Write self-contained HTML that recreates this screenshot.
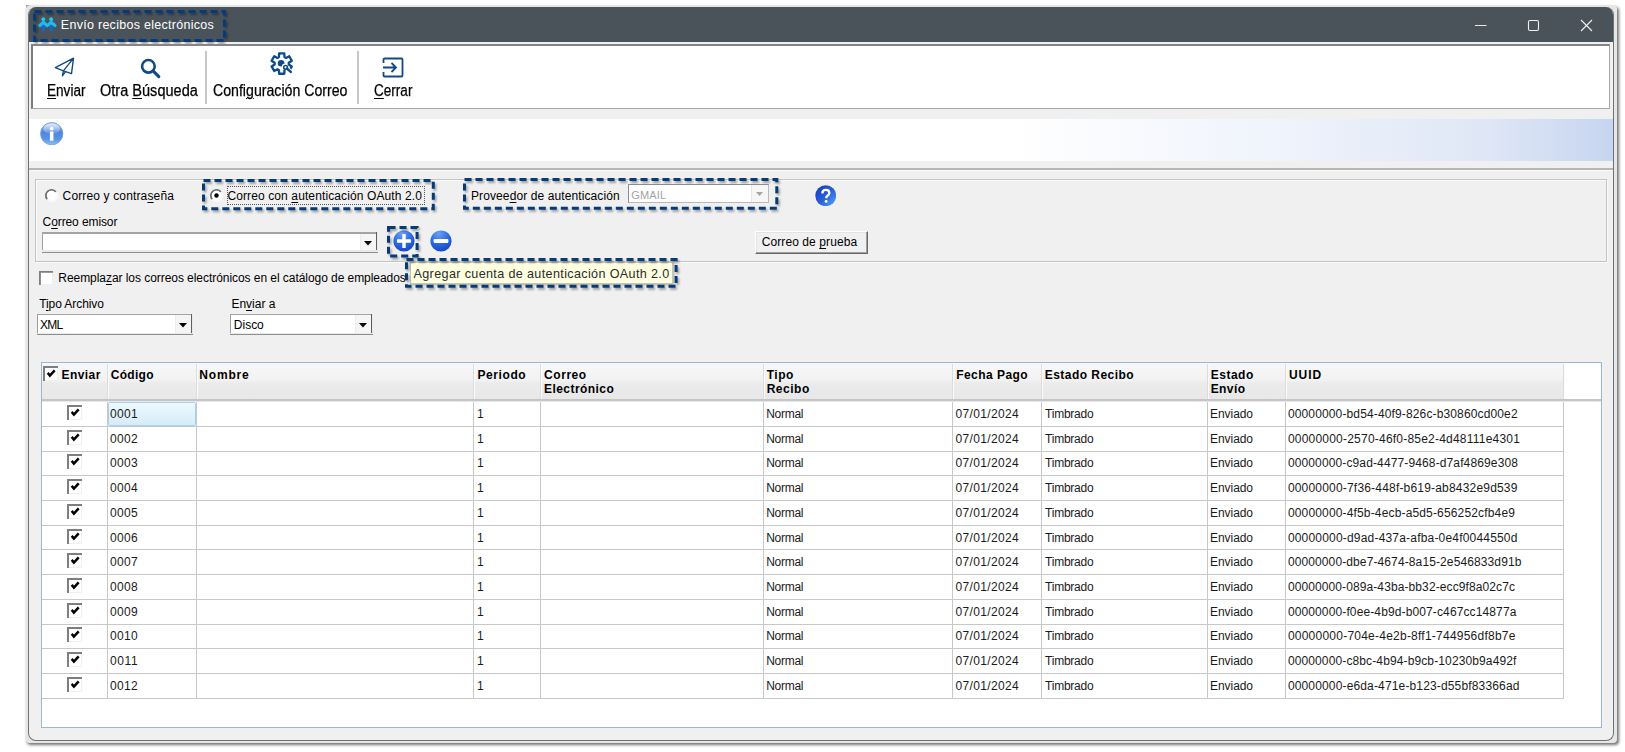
<!DOCTYPE html>
<html><head><meta charset="utf-8"><title>Envio recibos electronicos</title>
<style>
html,body{margin:0;padding:0;}
body{width:1625px;height:752px;position:relative;overflow:hidden;background:#fff;font-family:"Liberation Sans",sans-serif;}
.t{position:absolute;white-space:pre;}
.abs{position:absolute;}
u{text-decoration:underline;text-underline-offset:2px;text-decoration-thickness:1.4px;}
</style></head><body>
<svg width="0" height="0" style="position:absolute"><defs><filter id="bl" x="-20%" y="-50%" width="140%" height="200%"><feGaussianBlur stdDeviation="1.2"/></filter></defs></svg>
<div style="position:absolute;left:25.5px;top:5px;width:1591px;height:738px;background:#e6e6e6;border-radius:4px;box-shadow:1.5px 2px 3px rgba(0,0,0,.55);"></div>
<div style="position:absolute;left:28px;top:7px;width:1586px;height:734px;background:#f0f0f0;border-radius:8px;border:1px solid #6b7278;border-right-width:1.4px;border-bottom-width:1.5px;border-top:none;box-sizing:border-box;overflow:hidden;"><div style="position:absolute;left:-1px;top:0px;width:1586px;height:35px;background:#4b535a;"></div></div>
<svg class="abs" style="left:26px;top:5px" width="6" height="4"><path d="M0 0 H4.6 Q1.2 0.6 0 3.2 Z" fill="#a2a2a2"/></svg>
<svg class="abs" style="left:34px;top:12px;overflow:visible" width="30" height="26" viewBox="34 12 30 26"><rect x="41.8" y="24" width="3.1" height="7.5" rx="1.2" fill="#1f62c6"/><rect x="49.7" y="24" width="3.1" height="7.5" rx="1.2" fill="#1f62c6"/><path d="M39.8 25.5 L43.3 22.3 L47.3 25.7 L51.1 22.3 L55 25.5" fill="none" stroke="#1bbcf2" stroke-width="3.1" stroke-linecap="round" stroke-linejoin="round"/><circle cx="43.3" cy="19.3" r="1.95" fill="#1cc6f5"/><circle cx="51.1" cy="19.3" r="1.95" fill="#1cc6f5"/></svg>
<span class="t" style="left:60.80px;top:17.00px;font-size:12.5px;line-height:16px;color:#fff;letter-spacing:0.284px;">Envío recibos electrónicos</span>
<svg class="abs" style="left:1470px;top:15px" width="130" height="22"><path d="M5 10.5 H16.5" stroke="#e8e8e8" stroke-width="1"/><rect x="58.5" y="5.5" width="10" height="10" rx="1.5" fill="none" stroke="#f0f0f0" stroke-width="1.1"/><path d="M111 5 L122 16 M122 5 L111 16" stroke="#f0f0f0" stroke-width="1.1"/></svg>
<svg class="abs" style="left:26.9px;top:3.9000000000000004px;overflow:visible" width="205.0" height="44.0"><rect x="9.0" y="9.5" width="190.0" height="29.0" fill="none" stroke="#000" stroke-opacity=".35" stroke-width="3" stroke-dasharray="7 4" filter="url(#bl)"/><rect x="7.5" y="7.5" width="190.0" height="29.0" fill="none" stroke="#043b78" stroke-width="3" stroke-dasharray="7 4"/></svg>
<div style="position:absolute;left:31px;top:43.8px;width:1578.8px;height:65.2px;background:#fff;border:1.5px solid #a6a6a6;border-top:2px solid #858585;border-left:2px solid #7c7c7c;box-sizing:border-box;"></div>
<div style="position:absolute;left:204.7px;top:51px;width:2px;height:53px;background:#c6c6c6;"></div>
<div style="position:absolute;left:356.7px;top:51px;width:2px;height:53px;background:#c6c6c6;"></div>
<svg class="abs" style="left:50px;top:50px;overflow:visible" width="30" height="30" viewBox="50 50 30 30"><path d="M55.3 67.6 L73.5 58.2 L71.5 73.6 L63.4 70.9 Z M73.5 58.2 L63.4 70.9 L62.4 75.8 L65.6 71.7" fill="none" stroke="#0f4a84" stroke-width="1.35" stroke-linejoin="round" stroke-linecap="round"/></svg>
<svg class="abs" style="left:135px;top:50px;overflow:visible" width="30" height="30" viewBox="135 50 30 30"><circle cx="148.4" cy="66.3" r="6.3" fill="none" stroke="#0f4a84" stroke-width="2.6"/><path d="M153.3 71.2 L158.8 76.6" stroke="#0f4a84" stroke-width="3.1" stroke-linecap="round"/></svg>
<svg class="abs" style="left:266px;top:48px;overflow:visible" width="32" height="32" viewBox="266 48 32 32"><path d="M278.94 57.06 L279.10 53.43 L284.30 53.43 L284.46 57.06 L285.98 57.94 L289.21 56.26 L291.81 60.76 L288.75 62.72 L288.75 64.48 L291.81 66.44 L289.21 70.94 L285.98 69.26 L284.46 70.14 L284.30 73.77 L279.10 73.77 L278.94 70.14 L277.42 69.26 L274.19 70.94 L271.59 66.44 L274.65 64.48 L274.65 62.72 L271.59 60.76 L274.19 56.26 L277.42 57.94 Z" fill="none" stroke="#0f4a84" stroke-width="2.3" stroke-linejoin="round"/><circle cx="281.1" cy="63.2" r="3.3" fill="#0f4a84"/><path d="M284 66.2 L290.8 71.9" stroke="#fff" stroke-width="4.4" stroke-linecap="round"/><circle cx="285.6" cy="67.3" r="1.9" fill="#fff" stroke="#0f4a84" stroke-width="1.5"/><path d="M287 68.6 L290.8 71.9" stroke="#0f4a84" stroke-width="2.5" stroke-linecap="round"/></svg>
<svg class="abs" style="left:381px;top:56px" width="24" height="23" viewBox="0 0 24 23"><path d="M2.5 7 V3.6 Q2.5 2.5 3.6 2.5 H20.4 Q21.5 2.5 21.5 3.6 V19.4 Q21.5 20.5 20.4 20.5 H3.6 Q2.5 20.5 2.5 19.4 V16" fill="none" stroke="#0f4a84" stroke-width="1.8"/><path d="M2 11.5 H14.5 M10.5 7 L15 11.5 L10.5 16" fill="none" stroke="#0f4a84" stroke-width="1.8"/></svg>
<span class="t" style="left:46.90px;top:81.00px;font-size:15.8px;line-height:19px;color:#000;-webkit-text-stroke:.25px #000;transform:scaleX(0.8598);transform-origin:0 0;"><u>E</u>nviar</span>
<span class="t" style="left:100.40px;top:81.00px;font-size:15.8px;line-height:19px;color:#000;-webkit-text-stroke:.25px #000;transform:scaleX(0.9204);transform-origin:0 0;">Otra <u>B</u>úsqueda</span>
<span class="t" style="left:213.40px;top:81.00px;font-size:15.8px;line-height:19px;color:#000;-webkit-text-stroke:.25px #000;transform:scaleX(0.8951);transform-origin:0 0;">Confi<u>g</u>uración Correo</span>
<span class="t" style="left:374.40px;top:81.00px;font-size:15.8px;line-height:19px;color:#000;-webkit-text-stroke:.25px #000;transform:scaleX(0.8579);transform-origin:0 0;"><u>C</u>errar</span>
<div style="position:absolute;left:29px;top:118.5px;width:1584px;height:42px;background:linear-gradient(90deg,#fff 0%,#fff 62%,#f0f4fc 78%,#dfe7f6 92%,#c6d5f0 100%);"></div>
<svg class="abs" style="left:40.2px;top:121.8px" width="23.4" height="23.4" viewBox="0 0 24 24"><defs><linearGradient id="ig" x1="0" y1="0" x2="0" y2="1"><stop offset="0" stop-color="#8fb4ef"/><stop offset=".45" stop-color="#4f86dd"/><stop offset=".75" stop-color="#5b93e3"/><stop offset="1" stop-color="#93c2f3"/></linearGradient><linearGradient id="ig2" x1="0" y1="0" x2="0" y2="1"><stop offset="0" stop-color="#fff" stop-opacity=".75"/><stop offset="1" stop-color="#fff" stop-opacity=".05"/></linearGradient></defs><circle cx="12" cy="12" r="11.4" fill="url(#ig)" stroke="#6d9be0" stroke-width=".9"/><ellipse cx="12" cy="6.8" rx="8.6" ry="5.6" fill="url(#ig2)"/><circle cx="12" cy="6.7" r="1.9" fill="#fff"/><rect x="10.2" y="9.8" width="3.6" height="9.4" rx=".6" fill="#fff"/></svg>
<div style="position:absolute;left:29px;top:168px;width:1584px;height:1.6px;background:#b6b6b6;"></div>
<div style="position:absolute;left:29px;top:169.6px;width:1584px;height:1px;background:#f8f8f8;"></div>
<div style="position:absolute;left:35px;top:178.5px;width:1572px;height:83px;border:1.3px solid #c4c4c4;box-sizing:border-box;box-shadow:inset 1px 1px 0 #fafafa, 1px 1px 0 #fafafa;"></div>
<svg class="abs" style="left:44.2px;top:187.6px" width="15" height="15" viewBox="0 0 15 15"><circle cx="7.5" cy="7.5" r="6.7" fill="#f9f9f9"/><path d="M3.21 11.10 A5.6 5.6 0 0 1 11.79 3.90" fill="none" stroke="#6f6f6f" stroke-width="1.9"/><circle cx="7.5" cy="7.5" r="4.7" fill="#fff"/></svg>
<span class="t" style="left:62.60px;top:188.00px;font-size:12px;line-height:16px;color:#000;letter-spacing:0.143px;">Correo y contra<u>s</u>eña</span>
<svg class="abs" style="left:208.5px;top:187.7px" width="15" height="15" viewBox="0 0 15 15"><circle cx="7.5" cy="7.5" r="6.7" fill="#f9f9f9"/><path d="M3.21 11.10 A5.6 5.6 0 0 1 11.79 3.90" fill="none" stroke="#6f6f6f" stroke-width="1.9"/><circle cx="7.5" cy="7.5" r="4.7" fill="#fff"/><circle cx="7.5" cy="7.5" r="2.2" fill="#000"/></svg>
<span class="t" style="left:227.40px;top:188.00px;font-size:12px;line-height:16px;color:#000;letter-spacing:0.113px;">Correo con <u>a</u>utenticación OAuth 2.0</span>
<div style="position:absolute;left:226.5px;top:186px;width:198.5px;height:18.5px;border:1px dotted #555;box-sizing:border-box;"></div>
<svg class="abs" style="left:196.2px;top:173.2px;overflow:visible" width="244.8" height="43.20000000000002"><rect x="9.0" y="9.5" width="229.8" height="28.200000000000017" fill="none" stroke="#000" stroke-opacity=".35" stroke-width="3" stroke-dasharray="7 4" filter="url(#bl)"/><rect x="7.5" y="7.5" width="229.8" height="28.200000000000017" fill="none" stroke="#043b78" stroke-width="3" stroke-dasharray="7 4"/></svg>
<span class="t" style="left:471.00px;top:188.00px;font-size:12px;line-height:16px;color:#000;letter-spacing:0.100px;">Provee<u>d</u>or de autenticación</span>
<div style="position:absolute;left:627.8px;top:184px;width:141px;height:19.2px;background:#fff;border:1px solid #b9b9b9;border-top-color:#8e8e8e;border-left-color:#8e8e8e;box-sizing:border-box;"></div>
<span class="t" style="left:631.20px;top:188.00px;font-size:11px;line-height:14px;color:#a3a3a3;letter-spacing:0.193px;">GMAIL</span>
<div style="position:absolute;left:751px;top:185px;width:17px;height:17px;background:#f6f6f6;border-left:1px solid #e6e6e6;box-sizing:border-box;"></div>
<svg class="abs" style="left:756px;top:192px" width="8" height="5"><path d="M0 0 H7 L3.5 4 Z" fill="#a5a5a5"/></svg>
<svg class="abs" style="left:457.1px;top:172.2px;overflow:visible" width="327.29999999999995" height="43.70000000000002"><rect x="9.0" y="9.5" width="312.29999999999995" height="28.700000000000017" fill="none" stroke="#000" stroke-opacity=".35" stroke-width="3" stroke-dasharray="7 4" filter="url(#bl)"/><rect x="7.5" y="7.5" width="312.29999999999995" height="28.700000000000017" fill="none" stroke="#043b78" stroke-width="3" stroke-dasharray="7 4"/></svg>
<svg class="abs" style="left:814.9px;top:184.5px" width="21.5" height="21.5" viewBox="0 0 21 21"><defs><linearGradient id="hg" x1="0.1" y1="0.1" x2="0.9" y2="0.9"><stop offset="0" stop-color="#1a3cc0"/><stop offset=".55" stop-color="#2a62dc"/><stop offset="1" stop-color="#4c9cf5"/></linearGradient></defs><circle cx="10.5" cy="10.5" r="10.2" fill="url(#hg)"/><path d="M7.2 8.2 Q7.2 4.8 10.6 4.8 Q14 4.8 14 7.8 Q14 9.6 12.2 10.6 Q10.9 11.4 10.9 12.9" fill="none" stroke="#fff" stroke-width="2.3"/><circle cx="10.9" cy="16" r="1.45" fill="#fff"/></svg>
<span class="t" style="left:42.60px;top:214.00px;font-size:12px;line-height:16px;color:#000;letter-spacing:-0.102px;">C<u>o</u>rreo emisor</span>
<div style="position:absolute;left:41.5px;top:232px;width:336.5px;height:20.69999999999999px;background:#fff;"></div><div style="position:absolute;left:360px;top:233px;width:16px;height:17.69999999999999px;background:#f5f5f5;border-left:1px solid #ececec;box-sizing:border-box;"></div><div style="position:absolute;left:41.5px;top:232px;width:335.5px;height:1.6px;background:#a4a4a4;"></div><div style="position:absolute;left:41.5px;top:232px;width:1px;height:19.69999999999999px;background:#a0a0a0;"></div><div style="position:absolute;left:376px;top:232px;width:1px;height:19.69999999999999px;background:#5f5f5f;"></div><div style="position:absolute;left:377px;top:232px;width:1px;height:20.69999999999999px;background:#e9e9e9;"></div><div style="position:absolute;left:41.5px;top:250.2px;width:335.5px;height:1.5px;background:#e9e9e9;"></div><div style="position:absolute;left:41.5px;top:251.7px;width:336.1px;height:1px;background:#8e8e8e;"></div><svg class="abs" style="left:363.8px;top:241.25px" width="9" height="6"><path d="M0 0 H8 L4 4.6 Z" fill="#000"/></svg>
<svg class="abs" style="left:393px;top:230.2px" width="22" height="22" viewBox="0 0 22 22"><defs><radialGradient id="pg" cx="40%" cy="15%" r="85%"><stop offset="0" stop-color="#6ea0f2"/><stop offset=".5" stop-color="#2f6fe3"/><stop offset="1" stop-color="#1748cc"/></radialGradient></defs><circle cx="11" cy="11" r="10.6" fill="url(#pg)"/><rect x="3.9" y="9.3" width="14.2" height="3.4" rx=".6" fill="#fff"/><rect x="9.3" y="3.9" width="3.4" height="14.2" rx=".6" fill="#fff"/></svg>
<svg class="abs" style="left:430.3px;top:230.2px" width="22" height="22" viewBox="0 0 22 22"><defs><radialGradient id="mg" cx="40%" cy="15%" r="85%"><stop offset="0" stop-color="#6ea0f2"/><stop offset=".5" stop-color="#2f6fe3"/><stop offset="1" stop-color="#1748cc"/></radialGradient></defs><circle cx="11" cy="11" r="10.6" fill="url(#mg)"/><rect x="3.6" y="9.1" width="14.8" height="3.8" rx=".8" fill="#fff"/></svg>
<svg class="abs" style="left:381px;top:220.3px;overflow:visible" width="43.60000000000002" height="43.5"><rect x="9.0" y="9.5" width="28.600000000000023" height="28.5" fill="none" stroke="#000" stroke-opacity=".35" stroke-width="3" stroke-dasharray="7 4" filter="url(#bl)"/><rect x="7.5" y="7.5" width="28.600000000000023" height="28.5" fill="none" stroke="#043b78" stroke-width="3" stroke-dasharray="7 4"/></svg>
<div style="position:absolute;left:755px;top:230.5px;width:112.5px;height:23px;background:#f0f0f0;border:1px solid #fff;border-right:1px solid #696969;border-bottom:1px solid #696969;box-sizing:border-box;box-shadow:inset -1px -1px 0 #a0a0a0, inset 1px 1px 0 #e3e3e3;"></div>
<span class="t" style="left:761.70px;top:234.00px;font-size:12px;line-height:16px;color:#000;letter-spacing:0.089px;">Correo de <u>p</u>rueba</span>
<svg class="abs" style="left:39.2px;top:270.8px" width="14" height="14" viewBox="0 0 15 15"><rect x="0" y="0" width="15" height="15" fill="#fff"/><path d="M14.5 0.5 V14.5 H0.5" fill="none" stroke="#f0f0f0"/><path d="M1 15 V1 H15" fill="none" stroke="#7e7e7e" stroke-width="2"/></svg>
<span class="t" style="left:58.30px;top:270.00px;font-size:12px;line-height:16px;color:#000;letter-spacing:-0.054px;">Reempla<u>z</u>ar los correos electrónicos en el catálogo de empleados</span>
<div style="position:absolute;left:410.2px;top:261.8px;width:262.4px;height:22.6px;background:#ffffe1;border:1px solid #c9c9b0;box-sizing:border-box;box-shadow:1px 1px 2px rgba(0,0,0,.3);"></div>
<span class="t" style="left:413.50px;top:266.00px;font-size:12.6px;line-height:16px;color:#2b2b2b;letter-spacing:0.354px;">Agregar cuenta de autenticación OAuth 2.0</span>
<svg class="abs" style="left:399px;top:252px;overflow:visible" width="284.6" height="41.80000000000001"><rect x="9.0" y="9.5" width="269.6" height="26.80000000000001" fill="none" stroke="#000" stroke-opacity=".35" stroke-width="3" stroke-dasharray="7 4" filter="url(#bl)"/><rect x="7.5" y="7.5" width="269.6" height="26.80000000000001" fill="none" stroke="#043b78" stroke-width="3" stroke-dasharray="7 4"/></svg>
<span class="t" style="left:39.20px;top:296.00px;font-size:12px;line-height:16px;color:#000;letter-spacing:-0.080px;">T<u>i</u>po Archivo</span>
<span class="t" style="left:231.40px;top:296.00px;font-size:12px;line-height:16px;color:#000;letter-spacing:-0.003px;">En<u>v</u>iar a</span>
<div style="position:absolute;left:37.2px;top:313.7px;width:155.8px;height:21.30000000000001px;background:#fff;"></div><div style="position:absolute;left:175px;top:314.7px;width:16px;height:18.30000000000001px;background:#f5f5f5;border-left:1px solid #ececec;box-sizing:border-box;"></div><div style="position:absolute;left:37.2px;top:313.7px;width:154.8px;height:1.6px;background:#a4a4a4;"></div><div style="position:absolute;left:37.2px;top:313.7px;width:1px;height:20.30000000000001px;background:#a0a0a0;"></div><div style="position:absolute;left:191px;top:313.7px;width:1px;height:20.30000000000001px;background:#5f5f5f;"></div><div style="position:absolute;left:192px;top:313.7px;width:1px;height:21.30000000000001px;background:#e9e9e9;"></div><div style="position:absolute;left:37.2px;top:332.5px;width:154.8px;height:1.5px;background:#e9e9e9;"></div><div style="position:absolute;left:37.2px;top:334px;width:155.4px;height:1px;background:#8e8e8e;"></div><svg class="abs" style="left:178.8px;top:323.25px" width="9" height="6"><path d="M0 0 H8 L4 4.6 Z" fill="#000"/></svg><span class="t" style="left:39.90px;top:317.00px;font-size:12px;line-height:16px;color:#000;letter-spacing:-0.687px;">XML</span>
<div style="position:absolute;left:230px;top:313.7px;width:143px;height:21.30000000000001px;background:#fff;"></div><div style="position:absolute;left:355px;top:314.7px;width:16px;height:18.30000000000001px;background:#f5f5f5;border-left:1px solid #ececec;box-sizing:border-box;"></div><div style="position:absolute;left:230px;top:313.7px;width:142px;height:1.6px;background:#a4a4a4;"></div><div style="position:absolute;left:230px;top:313.7px;width:1px;height:20.30000000000001px;background:#a0a0a0;"></div><div style="position:absolute;left:371px;top:313.7px;width:1px;height:20.30000000000001px;background:#5f5f5f;"></div><div style="position:absolute;left:372px;top:313.7px;width:1px;height:21.30000000000001px;background:#e9e9e9;"></div><div style="position:absolute;left:230px;top:332.5px;width:142px;height:1.5px;background:#e9e9e9;"></div><div style="position:absolute;left:230px;top:334px;width:142.6px;height:1px;background:#8e8e8e;"></div><svg class="abs" style="left:358.8px;top:323.25px" width="9" height="6"><path d="M0 0 H8 L4 4.6 Z" fill="#000"/></svg><span class="t" style="left:233.80px;top:317.00px;font-size:12px;line-height:16px;color:#000;letter-spacing:-0.001px;">Disco</span>
<div style="position:absolute;left:41px;top:362px;width:1561px;height:366px;background:#fff;border:1px solid #9db6d2;box-sizing:border-box;"></div>
<div style="position:absolute;left:42px;top:363px;width:1521px;height:36px;background:linear-gradient(180deg,#f7f7f7 0%,#f2f2f2 48%,#ebebeb 56%,#e8e8e8 100%);"></div>
<div style="position:absolute;left:42px;top:398.8px;width:1559px;height:2.6px;background:#c5c5c5;"></div>
<div style="position:absolute;left:42px;top:401.4px;width:1559px;height:0.6px;background:#e8e8e8;"></div>
<div style="position:absolute;left:106.5px;top:364px;width:1px;height:35px;background:#dcdcdc;"></div>
<div style="position:absolute;left:107.5px;top:364px;width:1px;height:35px;background:#fbfbfb;"></div>
<div style="position:absolute;left:195.5px;top:364px;width:1px;height:35px;background:#dcdcdc;"></div>
<div style="position:absolute;left:196.5px;top:364px;width:1px;height:35px;background:#fbfbfb;"></div>
<div style="position:absolute;left:473.2px;top:364px;width:1px;height:35px;background:#dcdcdc;"></div>
<div style="position:absolute;left:474.2px;top:364px;width:1px;height:35px;background:#fbfbfb;"></div>
<div style="position:absolute;left:539.5px;top:364px;width:1px;height:35px;background:#dcdcdc;"></div>
<div style="position:absolute;left:540.5px;top:364px;width:1px;height:35px;background:#fbfbfb;"></div>
<div style="position:absolute;left:762.5px;top:364px;width:1px;height:35px;background:#dcdcdc;"></div>
<div style="position:absolute;left:763.5px;top:364px;width:1px;height:35px;background:#fbfbfb;"></div>
<div style="position:absolute;left:951.5px;top:364px;width:1px;height:35px;background:#dcdcdc;"></div>
<div style="position:absolute;left:952.5px;top:364px;width:1px;height:35px;background:#fbfbfb;"></div>
<div style="position:absolute;left:1040.5px;top:364px;width:1px;height:35px;background:#dcdcdc;"></div>
<div style="position:absolute;left:1041.5px;top:364px;width:1px;height:35px;background:#fbfbfb;"></div>
<div style="position:absolute;left:1206.8px;top:364px;width:1px;height:35px;background:#dcdcdc;"></div>
<div style="position:absolute;left:1207.8px;top:364px;width:1px;height:35px;background:#fbfbfb;"></div>
<div style="position:absolute;left:1284.5px;top:364px;width:1px;height:35px;background:#dcdcdc;"></div>
<div style="position:absolute;left:1285.5px;top:364px;width:1px;height:35px;background:#fbfbfb;"></div>
<div style="position:absolute;left:1562.5px;top:364px;width:1px;height:35px;background:#dcdcdc;"></div>
<div style="position:absolute;left:1563.5px;top:364px;width:1px;height:35px;background:#fbfbfb;"></div>
<span class="t" style="left:61.50px;top:367.00px;font-size:12px;line-height:16px;color:#000;letter-spacing:0.423px;font-weight:bold;">Enviar</span>
<span class="t" style="left:110.80px;top:367.00px;font-size:12px;line-height:16px;color:#000;letter-spacing:0.276px;font-weight:bold;">Código</span>
<span class="t" style="left:199.20px;top:367.00px;font-size:12px;line-height:16px;color:#000;letter-spacing:0.852px;font-weight:bold;">Nombre</span>
<span class="t" style="left:477.40px;top:367.00px;font-size:12px;line-height:16px;color:#000;letter-spacing:0.605px;font-weight:bold;">Periodo</span>
<span class="t" style="left:544.00px;top:367.00px;font-size:12px;line-height:16px;color:#000;letter-spacing:0.572px;font-weight:bold;">Correo</span>
<span class="t" style="left:544.00px;top:381.00px;font-size:12px;line-height:16px;color:#000;letter-spacing:0.445px;font-weight:bold;">Electrónico</span>
<span class="t" style="left:766.70px;top:367.00px;font-size:12px;line-height:16px;color:#000;letter-spacing:0.498px;font-weight:bold;">Tipo</span>
<span class="t" style="left:766.70px;top:381.00px;font-size:12px;line-height:16px;color:#000;letter-spacing:0.518px;font-weight:bold;">Recibo</span>
<span class="t" style="left:956.20px;top:367.00px;font-size:12px;line-height:16px;color:#000;letter-spacing:0.461px;font-weight:bold;">Fecha Pago</span>
<span class="t" style="left:1044.70px;top:367.00px;font-size:12px;line-height:16px;color:#000;letter-spacing:0.463px;font-weight:bold;">Estado Recibo</span>
<span class="t" style="left:1210.70px;top:367.00px;font-size:12px;line-height:16px;color:#000;letter-spacing:0.518px;font-weight:bold;">Estado</span>
<span class="t" style="left:1210.70px;top:381.00px;font-size:12px;line-height:16px;color:#000;letter-spacing:0.407px;font-weight:bold;">Envío</span>
<span class="t" style="left:1288.90px;top:367.00px;font-size:12px;line-height:16px;color:#000;letter-spacing:0.956px;font-weight:bold;">UUID</span>
<svg class="abs" style="left:43.4px;top:365.6px" width="15" height="15" viewBox="0 0 15 15"><rect x="0" y="0" width="15" height="15" fill="#fff"/><path d="M14.5 0.5 V14.5 H0.5" fill="none" stroke="#f0f0f0"/><path d="M1 15 V1 H15" fill="none" stroke="#7e7e7e" stroke-width="2"/><path d="M4.7 6.9 L6.9 9.6 L11.7 4.3" fill="none" stroke="#000" stroke-width="2.5"/></svg>
<div style="position:absolute;left:107.5px;top:402.3px;width:88.5px;height:23.69px;background:linear-gradient(180deg,#eef8fd,#d6ecf9);border:1px solid #a4d2ee;border-radius:1.5px;box-sizing:border-box;"></div>
<svg class="abs" style="left:66.6px;top:405.0px" width="15" height="15" viewBox="0 0 15 15"><rect x="0" y="0" width="15" height="15" fill="#fff"/><path d="M14.5 0.5 V14.5 H0.5" fill="none" stroke="#f0f0f0"/><path d="M1 15 V1 H15" fill="none" stroke="#7e7e7e" stroke-width="2"/><path d="M4.7 6.9 L6.9 9.6 L11.7 4.3" fill="none" stroke="#000" stroke-width="2.5"/></svg>
<span class="t" style="left:110.10px;top:406.00px;font-size:12px;line-height:16px;color:#1a1a1a;letter-spacing:0.268px;">0001</span>
<span class="t" style="left:476.90px;top:406.00px;font-size:12px;line-height:16px;color:#1a1a1a;">1</span>
<span class="t" style="left:766.20px;top:406.00px;font-size:12px;line-height:16px;color:#1a1a1a;letter-spacing:-0.274px;">Normal</span>
<span class="t" style="left:955.50px;top:406.00px;font-size:12px;line-height:16px;color:#1a1a1a;letter-spacing:0.338px;">07/01/2024</span>
<span class="t" style="left:1045.10px;top:406.00px;font-size:12px;line-height:16px;color:#1a1a1a;letter-spacing:-0.248px;">Timbrado</span>
<span class="t" style="left:1210.10px;top:406.00px;font-size:12px;line-height:16px;color:#1a1a1a;letter-spacing:-0.078px;">Enviado</span>
<span class="t" style="left:1287.90px;top:406.00px;font-size:12px;line-height:16px;color:#1a1a1a;letter-spacing:0.138px;">00000000-bd54-40f9-826c-b30860cd00e2</span>
<div style="position:absolute;left:42px;top:425.99px;width:1521.5px;height:1px;background:#c8c8c8;"></div>
<svg class="abs" style="left:66.6px;top:429.7px" width="15" height="15" viewBox="0 0 15 15"><rect x="0" y="0" width="15" height="15" fill="#fff"/><path d="M14.5 0.5 V14.5 H0.5" fill="none" stroke="#f0f0f0"/><path d="M1 15 V1 H15" fill="none" stroke="#7e7e7e" stroke-width="2"/><path d="M4.7 6.9 L6.9 9.6 L11.7 4.3" fill="none" stroke="#000" stroke-width="2.5"/></svg>
<span class="t" style="left:110.10px;top:431.00px;font-size:12px;line-height:16px;color:#1a1a1a;letter-spacing:0.268px;">0002</span>
<span class="t" style="left:476.90px;top:431.00px;font-size:12px;line-height:16px;color:#1a1a1a;">1</span>
<span class="t" style="left:766.20px;top:431.00px;font-size:12px;line-height:16px;color:#1a1a1a;letter-spacing:-0.274px;">Normal</span>
<span class="t" style="left:955.50px;top:431.00px;font-size:12px;line-height:16px;color:#1a1a1a;letter-spacing:0.338px;">07/01/2024</span>
<span class="t" style="left:1045.10px;top:431.00px;font-size:12px;line-height:16px;color:#1a1a1a;letter-spacing:-0.248px;">Timbrado</span>
<span class="t" style="left:1210.10px;top:431.00px;font-size:12px;line-height:16px;color:#1a1a1a;letter-spacing:-0.078px;">Enviado</span>
<span class="t" style="left:1287.90px;top:431.00px;font-size:12px;line-height:16px;color:#1a1a1a;letter-spacing:0.216px;">00000000-2570-46f0-85e2-4d48111e4301</span>
<div style="position:absolute;left:42px;top:450.68px;width:1521.5px;height:1px;background:#c8c8c8;"></div>
<svg class="abs" style="left:66.6px;top:454.4px" width="15" height="15" viewBox="0 0 15 15"><rect x="0" y="0" width="15" height="15" fill="#fff"/><path d="M14.5 0.5 V14.5 H0.5" fill="none" stroke="#f0f0f0"/><path d="M1 15 V1 H15" fill="none" stroke="#7e7e7e" stroke-width="2"/><path d="M4.7 6.9 L6.9 9.6 L11.7 4.3" fill="none" stroke="#000" stroke-width="2.5"/></svg>
<span class="t" style="left:110.10px;top:455.00px;font-size:12px;line-height:16px;color:#1a1a1a;letter-spacing:0.268px;">0003</span>
<span class="t" style="left:476.90px;top:455.00px;font-size:12px;line-height:16px;color:#1a1a1a;">1</span>
<span class="t" style="left:766.20px;top:455.00px;font-size:12px;line-height:16px;color:#1a1a1a;letter-spacing:-0.274px;">Normal</span>
<span class="t" style="left:955.50px;top:455.00px;font-size:12px;line-height:16px;color:#1a1a1a;letter-spacing:0.338px;">07/01/2024</span>
<span class="t" style="left:1045.10px;top:455.00px;font-size:12px;line-height:16px;color:#1a1a1a;letter-spacing:-0.248px;">Timbrado</span>
<span class="t" style="left:1210.10px;top:455.00px;font-size:12px;line-height:16px;color:#1a1a1a;letter-spacing:-0.078px;">Enviado</span>
<span class="t" style="left:1287.90px;top:455.00px;font-size:12px;line-height:16px;color:#1a1a1a;letter-spacing:0.128px;">00000000-c9ad-4477-9468-d7af4869e308</span>
<div style="position:absolute;left:42px;top:475.37px;width:1521.5px;height:1px;background:#c8c8c8;"></div>
<svg class="abs" style="left:66.6px;top:479.1px" width="15" height="15" viewBox="0 0 15 15"><rect x="0" y="0" width="15" height="15" fill="#fff"/><path d="M14.5 0.5 V14.5 H0.5" fill="none" stroke="#f0f0f0"/><path d="M1 15 V1 H15" fill="none" stroke="#7e7e7e" stroke-width="2"/><path d="M4.7 6.9 L6.9 9.6 L11.7 4.3" fill="none" stroke="#000" stroke-width="2.5"/></svg>
<span class="t" style="left:110.10px;top:480.00px;font-size:12px;line-height:16px;color:#1a1a1a;letter-spacing:0.268px;">0004</span>
<span class="t" style="left:476.90px;top:480.00px;font-size:12px;line-height:16px;color:#1a1a1a;">1</span>
<span class="t" style="left:766.20px;top:480.00px;font-size:12px;line-height:16px;color:#1a1a1a;letter-spacing:-0.274px;">Normal</span>
<span class="t" style="left:955.50px;top:480.00px;font-size:12px;line-height:16px;color:#1a1a1a;letter-spacing:0.338px;">07/01/2024</span>
<span class="t" style="left:1045.10px;top:480.00px;font-size:12px;line-height:16px;color:#1a1a1a;letter-spacing:-0.248px;">Timbrado</span>
<span class="t" style="left:1210.10px;top:480.00px;font-size:12px;line-height:16px;color:#1a1a1a;letter-spacing:-0.078px;">Enviado</span>
<span class="t" style="left:1287.90px;top:480.00px;font-size:12px;line-height:16px;color:#1a1a1a;letter-spacing:0.190px;">00000000-7f36-448f-b619-ab8432e9d539</span>
<div style="position:absolute;left:42px;top:500.06px;width:1521.5px;height:1px;background:#c8c8c8;"></div>
<svg class="abs" style="left:66.6px;top:503.8px" width="15" height="15" viewBox="0 0 15 15"><rect x="0" y="0" width="15" height="15" fill="#fff"/><path d="M14.5 0.5 V14.5 H0.5" fill="none" stroke="#f0f0f0"/><path d="M1 15 V1 H15" fill="none" stroke="#7e7e7e" stroke-width="2"/><path d="M4.7 6.9 L6.9 9.6 L11.7 4.3" fill="none" stroke="#000" stroke-width="2.5"/></svg>
<span class="t" style="left:110.10px;top:505.00px;font-size:12px;line-height:16px;color:#1a1a1a;letter-spacing:0.268px;">0005</span>
<span class="t" style="left:476.90px;top:505.00px;font-size:12px;line-height:16px;color:#1a1a1a;">1</span>
<span class="t" style="left:766.20px;top:505.00px;font-size:12px;line-height:16px;color:#1a1a1a;letter-spacing:-0.274px;">Normal</span>
<span class="t" style="left:955.50px;top:505.00px;font-size:12px;line-height:16px;color:#1a1a1a;letter-spacing:0.338px;">07/01/2024</span>
<span class="t" style="left:1045.10px;top:505.00px;font-size:12px;line-height:16px;color:#1a1a1a;letter-spacing:-0.248px;">Timbrado</span>
<span class="t" style="left:1210.10px;top:505.00px;font-size:12px;line-height:16px;color:#1a1a1a;letter-spacing:-0.078px;">Enviado</span>
<span class="t" style="left:1287.90px;top:505.00px;font-size:12px;line-height:16px;color:#1a1a1a;letter-spacing:0.157px;">00000000-4f5b-4ecb-a5d5-656252cfb4e9</span>
<div style="position:absolute;left:42px;top:524.75px;width:1521.5px;height:1px;background:#c8c8c8;"></div>
<svg class="abs" style="left:66.6px;top:528.5px" width="15" height="15" viewBox="0 0 15 15"><rect x="0" y="0" width="15" height="15" fill="#fff"/><path d="M14.5 0.5 V14.5 H0.5" fill="none" stroke="#f0f0f0"/><path d="M1 15 V1 H15" fill="none" stroke="#7e7e7e" stroke-width="2"/><path d="M4.7 6.9 L6.9 9.6 L11.7 4.3" fill="none" stroke="#000" stroke-width="2.5"/></svg>
<span class="t" style="left:110.10px;top:530.00px;font-size:12px;line-height:16px;color:#1a1a1a;letter-spacing:0.268px;">0006</span>
<span class="t" style="left:476.90px;top:530.00px;font-size:12px;line-height:16px;color:#1a1a1a;">1</span>
<span class="t" style="left:766.20px;top:530.00px;font-size:12px;line-height:16px;color:#1a1a1a;letter-spacing:-0.274px;">Normal</span>
<span class="t" style="left:955.50px;top:530.00px;font-size:12px;line-height:16px;color:#1a1a1a;letter-spacing:0.338px;">07/01/2024</span>
<span class="t" style="left:1045.10px;top:530.00px;font-size:12px;line-height:16px;color:#1a1a1a;letter-spacing:-0.248px;">Timbrado</span>
<span class="t" style="left:1210.10px;top:530.00px;font-size:12px;line-height:16px;color:#1a1a1a;letter-spacing:-0.078px;">Enviado</span>
<span class="t" style="left:1287.90px;top:530.00px;font-size:12px;line-height:16px;color:#1a1a1a;letter-spacing:0.190px;">00000000-d9ad-437a-afba-0e4f0044550d</span>
<div style="position:absolute;left:42px;top:549.44px;width:1521.5px;height:1px;background:#c8c8c8;"></div>
<svg class="abs" style="left:66.6px;top:553.1px" width="15" height="15" viewBox="0 0 15 15"><rect x="0" y="0" width="15" height="15" fill="#fff"/><path d="M14.5 0.5 V14.5 H0.5" fill="none" stroke="#f0f0f0"/><path d="M1 15 V1 H15" fill="none" stroke="#7e7e7e" stroke-width="2"/><path d="M4.7 6.9 L6.9 9.6 L11.7 4.3" fill="none" stroke="#000" stroke-width="2.5"/></svg>
<span class="t" style="left:110.10px;top:554.00px;font-size:12px;line-height:16px;color:#1a1a1a;letter-spacing:0.268px;">0007</span>
<span class="t" style="left:476.90px;top:554.00px;font-size:12px;line-height:16px;color:#1a1a1a;">1</span>
<span class="t" style="left:766.20px;top:554.00px;font-size:12px;line-height:16px;color:#1a1a1a;letter-spacing:-0.274px;">Normal</span>
<span class="t" style="left:955.50px;top:554.00px;font-size:12px;line-height:16px;color:#1a1a1a;letter-spacing:0.338px;">07/01/2024</span>
<span class="t" style="left:1045.10px;top:554.00px;font-size:12px;line-height:16px;color:#1a1a1a;letter-spacing:-0.248px;">Timbrado</span>
<span class="t" style="left:1210.10px;top:554.00px;font-size:12px;line-height:16px;color:#1a1a1a;letter-spacing:-0.078px;">Enviado</span>
<span class="t" style="left:1287.90px;top:554.00px;font-size:12px;line-height:16px;color:#1a1a1a;letter-spacing:0.113px;">00000000-dbe7-4674-8a15-2e546833d91b</span>
<div style="position:absolute;left:42px;top:574.13px;width:1521.5px;height:1px;background:#c8c8c8;"></div>
<svg class="abs" style="left:66.6px;top:577.8px" width="15" height="15" viewBox="0 0 15 15"><rect x="0" y="0" width="15" height="15" fill="#fff"/><path d="M14.5 0.5 V14.5 H0.5" fill="none" stroke="#f0f0f0"/><path d="M1 15 V1 H15" fill="none" stroke="#7e7e7e" stroke-width="2"/><path d="M4.7 6.9 L6.9 9.6 L11.7 4.3" fill="none" stroke="#000" stroke-width="2.5"/></svg>
<span class="t" style="left:110.10px;top:579.00px;font-size:12px;line-height:16px;color:#1a1a1a;letter-spacing:0.268px;">0008</span>
<span class="t" style="left:476.90px;top:579.00px;font-size:12px;line-height:16px;color:#1a1a1a;">1</span>
<span class="t" style="left:766.20px;top:579.00px;font-size:12px;line-height:16px;color:#1a1a1a;letter-spacing:-0.274px;">Normal</span>
<span class="t" style="left:955.50px;top:579.00px;font-size:12px;line-height:16px;color:#1a1a1a;letter-spacing:0.338px;">07/01/2024</span>
<span class="t" style="left:1045.10px;top:579.00px;font-size:12px;line-height:16px;color:#1a1a1a;letter-spacing:-0.248px;">Timbrado</span>
<span class="t" style="left:1210.10px;top:579.00px;font-size:12px;line-height:16px;color:#1a1a1a;letter-spacing:-0.078px;">Enviado</span>
<span class="t" style="left:1287.90px;top:579.00px;font-size:12px;line-height:16px;color:#1a1a1a;letter-spacing:0.100px;">00000000-089a-43ba-bb32-ecc9f8a02c7c</span>
<div style="position:absolute;left:42px;top:598.82px;width:1521.5px;height:1px;background:#c8c8c8;"></div>
<svg class="abs" style="left:66.6px;top:602.5px" width="15" height="15" viewBox="0 0 15 15"><rect x="0" y="0" width="15" height="15" fill="#fff"/><path d="M14.5 0.5 V14.5 H0.5" fill="none" stroke="#f0f0f0"/><path d="M1 15 V1 H15" fill="none" stroke="#7e7e7e" stroke-width="2"/><path d="M4.7 6.9 L6.9 9.6 L11.7 4.3" fill="none" stroke="#000" stroke-width="2.5"/></svg>
<span class="t" style="left:110.10px;top:604.00px;font-size:12px;line-height:16px;color:#1a1a1a;letter-spacing:0.268px;">0009</span>
<span class="t" style="left:476.90px;top:604.00px;font-size:12px;line-height:16px;color:#1a1a1a;">1</span>
<span class="t" style="left:766.20px;top:604.00px;font-size:12px;line-height:16px;color:#1a1a1a;letter-spacing:-0.274px;">Normal</span>
<span class="t" style="left:955.50px;top:604.00px;font-size:12px;line-height:16px;color:#1a1a1a;letter-spacing:0.338px;">07/01/2024</span>
<span class="t" style="left:1045.10px;top:604.00px;font-size:12px;line-height:16px;color:#1a1a1a;letter-spacing:-0.248px;">Timbrado</span>
<span class="t" style="left:1210.10px;top:604.00px;font-size:12px;line-height:16px;color:#1a1a1a;letter-spacing:-0.078px;">Enviado</span>
<span class="t" style="left:1287.90px;top:604.00px;font-size:12px;line-height:16px;color:#1a1a1a;letter-spacing:0.123px;">00000000-f0ee-4b9d-b007-c467cc14877a</span>
<div style="position:absolute;left:42px;top:623.51px;width:1521.5px;height:1px;background:#c8c8c8;"></div>
<svg class="abs" style="left:66.6px;top:627.2px" width="15" height="15" viewBox="0 0 15 15"><rect x="0" y="0" width="15" height="15" fill="#fff"/><path d="M14.5 0.5 V14.5 H0.5" fill="none" stroke="#f0f0f0"/><path d="M1 15 V1 H15" fill="none" stroke="#7e7e7e" stroke-width="2"/><path d="M4.7 6.9 L6.9 9.6 L11.7 4.3" fill="none" stroke="#000" stroke-width="2.5"/></svg>
<span class="t" style="left:110.10px;top:628.00px;font-size:12px;line-height:16px;color:#1a1a1a;letter-spacing:0.268px;">0010</span>
<span class="t" style="left:476.90px;top:628.00px;font-size:12px;line-height:16px;color:#1a1a1a;">1</span>
<span class="t" style="left:766.20px;top:628.00px;font-size:12px;line-height:16px;color:#1a1a1a;letter-spacing:-0.274px;">Normal</span>
<span class="t" style="left:955.50px;top:628.00px;font-size:12px;line-height:16px;color:#1a1a1a;letter-spacing:0.338px;">07/01/2024</span>
<span class="t" style="left:1045.10px;top:628.00px;font-size:12px;line-height:16px;color:#1a1a1a;letter-spacing:-0.248px;">Timbrado</span>
<span class="t" style="left:1210.10px;top:628.00px;font-size:12px;line-height:16px;color:#1a1a1a;letter-spacing:-0.078px;">Enviado</span>
<span class="t" style="left:1287.90px;top:628.00px;font-size:12px;line-height:16px;color:#1a1a1a;letter-spacing:0.234px;">00000000-704e-4e2b-8ff1-744956df8b7e</span>
<div style="position:absolute;left:42px;top:648.2px;width:1521.5px;height:1px;background:#c8c8c8;"></div>
<svg class="abs" style="left:66.6px;top:651.9px" width="15" height="15" viewBox="0 0 15 15"><rect x="0" y="0" width="15" height="15" fill="#fff"/><path d="M14.5 0.5 V14.5 H0.5" fill="none" stroke="#f0f0f0"/><path d="M1 15 V1 H15" fill="none" stroke="#7e7e7e" stroke-width="2"/><path d="M4.7 6.9 L6.9 9.6 L11.7 4.3" fill="none" stroke="#000" stroke-width="2.5"/></svg>
<span class="t" style="left:110.10px;top:653.00px;font-size:12px;line-height:16px;color:#1a1a1a;letter-spacing:0.565px;">0011</span>
<span class="t" style="left:476.90px;top:653.00px;font-size:12px;line-height:16px;color:#1a1a1a;">1</span>
<span class="t" style="left:766.20px;top:653.00px;font-size:12px;line-height:16px;color:#1a1a1a;letter-spacing:-0.274px;">Normal</span>
<span class="t" style="left:955.50px;top:653.00px;font-size:12px;line-height:16px;color:#1a1a1a;letter-spacing:0.338px;">07/01/2024</span>
<span class="t" style="left:1045.10px;top:653.00px;font-size:12px;line-height:16px;color:#1a1a1a;letter-spacing:-0.248px;">Timbrado</span>
<span class="t" style="left:1210.10px;top:653.00px;font-size:12px;line-height:16px;color:#1a1a1a;letter-spacing:-0.078px;">Enviado</span>
<span class="t" style="left:1287.90px;top:653.00px;font-size:12px;line-height:16px;color:#1a1a1a;letter-spacing:0.123px;">00000000-c8bc-4b94-b9cb-10230b9a492f</span>
<div style="position:absolute;left:42px;top:672.89px;width:1521.5px;height:1px;background:#c8c8c8;"></div>
<svg class="abs" style="left:66.6px;top:676.6px" width="15" height="15" viewBox="0 0 15 15"><rect x="0" y="0" width="15" height="15" fill="#fff"/><path d="M14.5 0.5 V14.5 H0.5" fill="none" stroke="#f0f0f0"/><path d="M1 15 V1 H15" fill="none" stroke="#7e7e7e" stroke-width="2"/><path d="M4.7 6.9 L6.9 9.6 L11.7 4.3" fill="none" stroke="#000" stroke-width="2.5"/></svg>
<span class="t" style="left:110.10px;top:678.00px;font-size:12px;line-height:16px;color:#1a1a1a;letter-spacing:0.268px;">0012</span>
<span class="t" style="left:476.90px;top:678.00px;font-size:12px;line-height:16px;color:#1a1a1a;">1</span>
<span class="t" style="left:766.20px;top:678.00px;font-size:12px;line-height:16px;color:#1a1a1a;letter-spacing:-0.274px;">Normal</span>
<span class="t" style="left:955.50px;top:678.00px;font-size:12px;line-height:16px;color:#1a1a1a;letter-spacing:0.338px;">07/01/2024</span>
<span class="t" style="left:1045.10px;top:678.00px;font-size:12px;line-height:16px;color:#1a1a1a;letter-spacing:-0.248px;">Timbrado</span>
<span class="t" style="left:1210.10px;top:678.00px;font-size:12px;line-height:16px;color:#1a1a1a;letter-spacing:-0.078px;">Enviado</span>
<span class="t" style="left:1287.90px;top:678.00px;font-size:12px;line-height:16px;color:#1a1a1a;letter-spacing:0.151px;">00000000-e6da-471e-b123-d55bf83366ad</span>
<div style="position:absolute;left:42px;top:697.58px;width:1521.5px;height:1px;background:#c8c8c8;"></div>
<div style="position:absolute;left:106.5px;top:401.5px;width:1px;height:296.58000000000004px;background:#c8c8c8;"></div>
<div style="position:absolute;left:195.5px;top:401.5px;width:1px;height:296.58000000000004px;background:#c8c8c8;"></div>
<div style="position:absolute;left:473.2px;top:401.5px;width:1px;height:296.58000000000004px;background:#c8c8c8;"></div>
<div style="position:absolute;left:539.5px;top:401.5px;width:1px;height:296.58000000000004px;background:#c8c8c8;"></div>
<div style="position:absolute;left:762.5px;top:401.5px;width:1px;height:296.58000000000004px;background:#c8c8c8;"></div>
<div style="position:absolute;left:951.5px;top:401.5px;width:1px;height:296.58000000000004px;background:#c8c8c8;"></div>
<div style="position:absolute;left:1040.5px;top:401.5px;width:1px;height:296.58000000000004px;background:#c8c8c8;"></div>
<div style="position:absolute;left:1206.8px;top:401.5px;width:1px;height:296.58000000000004px;background:#c8c8c8;"></div>
<div style="position:absolute;left:1284.5px;top:401.5px;width:1px;height:296.58000000000004px;background:#c8c8c8;"></div>
<div style="position:absolute;left:1562.5px;top:401.5px;width:1px;height:296.58000000000004px;background:#c8c8c8;"></div>
</body></html>
